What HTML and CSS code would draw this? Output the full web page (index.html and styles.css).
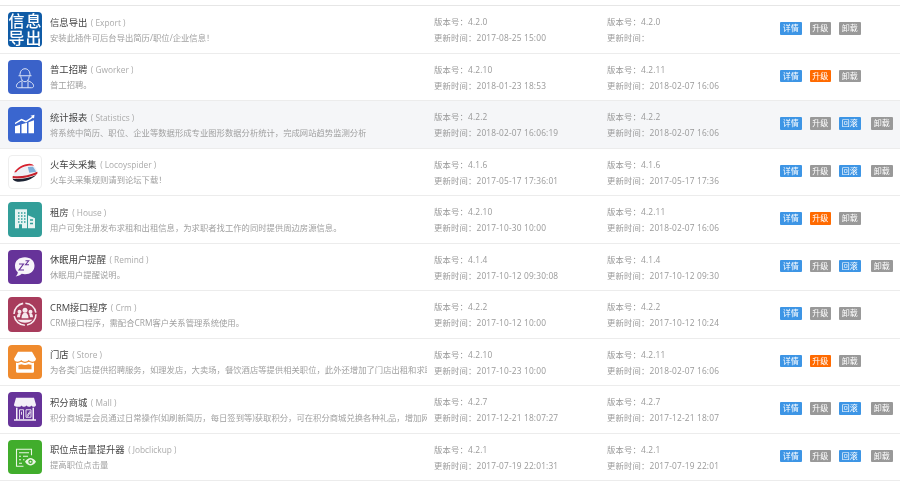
FILE: index.html
```html
<!DOCTYPE html>
<html lang="zh-CN">
<head>
<meta charset="utf-8">
<title>插件管理</title>
<link rel="stylesheet" href="styles.css">
</head>
<body>
<main class="list">

<section class="row">
  <div class="name">
    <div class="icon icon-export"><span>信</span><span>息</span><span>导</span><span>出</span></div>
    <div class="info"><p class="title">信息导出<span class="code">( Export )</span></p><p class="desc">安装此插件可后台导出简历/职位/企业信息！</p></div>
  </div>
  <div class="ver"><p>版本号：4.2.0</p><p>更新时间：2017-08-25 15:00</p></div>
  <div class="ver"><p>版本号：4.2.0</p><p>更新时间：</p></div>
  <div class="actions"><a class="btn blue">详情</a><a class="btn gray">升级</a><a class="btn gray">卸载</a></div>
</section>

<section class="row">
  <div class="name">
    <div class="icon icon-worker"><svg viewBox="0 0 34 34"><g fill="none" stroke="#dfe6f7" stroke-width="1"><path d="M10.500 15.500h13M12 15.500c-.3-4 1.700-7 5-7s5.300 3 5 7"/><path d="M12.800 16c.3 3.300 2 5.500 4.200 5.500s3.900-2.200 4.200-5.500"/><path d="M14 20.500c-2.500 1-5 2.300-5.500 4.500-.4 1.800.5 2.500 2 2.500h13c1.500 0 2.400-.7 2-2.500-.5-2.200-3-3.500-5.500-4.500"/><path d="M14 21v6.500M20 21v6.500"/></g></svg></div>
    <div class="info"><p class="title">普工招聘<span class="code">( Gworker )</span></p><p class="desc">普工招聘。</p></div>
  </div>
  <div class="ver"><p>版本号：4.2.10</p><p>更新时间：2018-01-23 18:53</p></div>
  <div class="ver"><p>版本号：4.2.11</p><p>更新时间：2018-02-07 16:06</p></div>
  <div class="actions"><a class="btn blue">详情</a><a class="btn orange">升级</a><a class="btn gray">卸载</a></div>
</section>

<section class="row hover">
  <div class="name">
    <div class="icon icon-stats"><svg viewBox="0 0 34 34"><g fill="#fff"><path d="M7 19l5-1.500V26H7zM13.500 17l5.500-1.500V26h-5.500zM20.500 15l5.500-2v13h-5.500z"/><path d="M7 15.500l6.500-4 4.500 2 6-4-1.500-1 4-1-.5 3.800-1-.8-7 4.800-4.500-2L7 17z"/></g></svg></div>
    <div class="info"><p class="title">统计报表<span class="code">( Statistics )</span></p><p class="desc">将系统中简历、职位、企业等数据形成专业图形数据分析统计，完成网站趋势监测分析</p></div>
  </div>
  <div class="ver"><p>版本号：4.2.2</p><p>更新时间：2018-02-07 16:06:19</p></div>
  <div class="ver"><p>版本号：4.2.2</p><p>更新时间：2018-02-07 16:06</p></div>
  <div class="actions"><a class="btn blue">详情</a><a class="btn gray">升级</a><a class="btn blue">回滚</a><a class="btn gray">卸载</a></div>
</section>

<section class="row">
  <div class="name">
    <div class="icon icon-train"><svg viewBox="0 0 34 34"><path d="M4 22c1-7 8-14 18-14 3 0 6 3 8 8 .5 1.500-.3 2.500-2 3-8 3-15 4-24 3z" fill="#eef0f6"/><path d="M5.500 17c3.500-5 9.500-9 16.500-9 1.700 0 3.300.8 4.500 2-7.500-1-15 2-19 7z" fill="#d8222f"/><path d="M4 21c8 1 17-.5 26-4.500.6 1.500.2 2.500-1.500 3.200-8 3-16 4.500-24.700 3.800z" fill="#c4202c"/><path d="M4 24c8 .8 17-.5 25-4-5 5-13 7.500-20 7-3 -.2-5-1.500-5-3z" fill="#1c2333"/><path d="M20 11.500l5.500-.3 3.500 5.300-7.500 1z" fill="#7fb0da"/></svg></div>
    <div class="info"><p class="title">火车头采集<span class="code">( Locoyspider )</span></p><p class="desc">火车头采集规则请到论坛下载！</p></div>
  </div>
  <div class="ver"><p>版本号：4.1.6</p><p>更新时间：2017-05-17 17:36:01</p></div>
  <div class="ver"><p>版本号：4.1.6</p><p>更新时间：2017-05-17 17:36</p></div>
  <div class="actions"><a class="btn blue">详情</a><a class="btn gray">升级</a><a class="btn blue">回滚</a><a class="btn gray">卸载</a></div>
</section>

<section class="row">
  <div class="name">
    <div class="icon icon-house"><svg viewBox="0 0 34 34"><path d="M7 7h12v19h-5v-4h-3v4H7zM20 13l7 3v10h-7z" fill="#e6f4f2"/><path d="M10 10h1.500v1.500H10zM13 10h1.500v1.500H13zM16 10h1.500v1.500H16zM10 13h1.500v1.500H10zM13 13h1.500v1.500H13zM16 13h1.500v1.500H16zM10 16h1.500v1.500H10zM13 16h1.500v1.500H13zM16 16h1.500v1.500H16zM10 19h1.500v1.500H10zM13 19h1.500v1.500H13zM16 19h1.500v1.500H16zM22 17h3v1.500h-3zM22 20.500h3V22h-3z" fill="#329e99"/></svg></div>
    <div class="info"><p class="title">租房<span class="code">( House )</span></p><p class="desc">用户可免注册发布求租和出租信息，为求职者找工作的同时提供周边房源信息。</p></div>
  </div>
  <div class="ver"><p>版本号：4.2.10</p><p>更新时间：2017-10-30 10:00</p></div>
  <div class="ver"><p>版本号：4.2.11</p><p>更新时间：2018-02-07 16:06</p></div>
  <div class="actions"><a class="btn blue">详情</a><a class="btn orange">升级</a><a class="btn gray">卸载</a></div>
</section>

<section class="row">
  <div class="name">
    <div class="icon icon-sleep"><svg viewBox="0 0 34 34"><path d="M17 7c5.500 0 9.500 3.500 9.500 8.500S22.500 24 17 24c-1.200 0-2.300-.1-3.300-.4-1.500 1.500-3.500 2.400-6 2.700 1.300-1.200 2-2.600 2.100-4.200C8 20.500 7 18.200 7 15.500 7 10.500 11 7 17 7z" fill="#f7f3fa"/><path d="M11 13.800h4.500L11 19.800h5M17.500 10.500h3.200l-3.200 4h3.500" fill="none" stroke="#663399" stroke-width="1.100"/></svg></div>
    <div class="info"><p class="title">休眠用户提醒<span class="code">( Remind )</span></p><p class="desc">休眠用户提醒说明。</p></div>
  </div>
  <div class="ver"><p>版本号：4.1.4</p><p>更新时间：2017-10-12 09:30:08</p></div>
  <div class="ver"><p>版本号：4.1.4</p><p>更新时间：2017-10-12 09:30</p></div>
  <div class="actions"><a class="btn blue">详情</a><a class="btn gray">升级</a><a class="btn blue">回滚</a><a class="btn gray">卸载</a></div>
</section>

<section class="row">
  <div class="name">
    <div class="icon icon-crm"><svg viewBox="0 0 34 34"><circle cx="17" cy="17" r="11" fill="none" stroke="#f6e9ee" stroke-width="1.600" stroke-dasharray="15 2.300"/><g fill="#f6e9ee"><circle cx="17" cy="13" r="2.500"/><circle cx="11.500" cy="14.500" r="2"/><circle cx="22.500" cy="14.500" r="2"/><path d="M13.500 21c0-3.500 1.500-5.500 3.500-5.500s3.500 2 3.500 5.500zM9 20c0-2.500 1-4 2.500-4 .6 0 1 .2 1.400.5-.6 1-.9 2.200-.9 3.500zM25 20c0-2.500-1-4-2.500-4-.6 0-1 .2-1.400.5.6 1 .9 2.200.9 3.500z"/><path d="M9.500 22.500h15c-1.500 2-4.500 3-7.500 3s-6-1-7.500-3z"/></g></svg></div>
    <div class="info"><p class="title">CRM接口程序<span class="code">( Crm )</span></p><p class="desc">CRM接口程序，需配合CRM客户关系管理系统使用。</p></div>
  </div>
  <div class="ver"><p>版本号：4.2.2</p><p>更新时间：2017-10-12 10:00</p></div>
  <div class="ver"><p>版本号：4.2.2</p><p>更新时间：2017-10-12 10:24</p></div>
  <div class="actions"><a class="btn blue">详情</a><a class="btn gray">升级</a><a class="btn gray">卸载</a></div>
</section>

<section class="row">
  <div class="name">
    <div class="icon icon-store"><svg viewBox="0 0 34 34"><path d="M10 6.500h14l4 7c0 2-1.600 3-3.700 3-1.400 0-2.500-.6-3.600-1.700-1 1.100-2.200 1.700-3.700 1.700s-2.700-.6-3.700-1.700C12.200 15.900 11.100 16.500 9.700 16.500 7.600 16.500 6 15.500 6 13.500z" fill="#fff"/><path d="M8 17.500c2 .4 3.500 0 5-1 2.500 1.500 5.500 1.500 8 0 1.500 1 3 1.400 5 1V26a1.500 1.500 0 0 1-1.500 1.500h-15A1.500 1.500 0 0 1 8 26zM10.500 19.500c1.500.2 2.500-.2 3-.5 2 1 5 1 7 0 .5.3 1.500.7 3 .5V24h-13z" fill="#fff" fill-rule="evenodd"/></svg></div>
    <div class="info"><p class="title">门店<span class="code">( Store )</span></p><p class="desc">为各类门店提供招聘服务，如理发店，大卖场，餐饮酒店等提供相关职位，此外还增加了门店出租和求职信息</p></div>
  </div>
  <div class="ver"><p>版本号：4.2.10</p><p>更新时间：2017-10-23 10:00</p></div>
  <div class="ver"><p>版本号：4.2.11</p><p>更新时间：2018-02-07 16:06</p></div>
  <div class="actions"><a class="btn blue">详情</a><a class="btn orange">升级</a><a class="btn gray">卸载</a></div>
</section>

<section class="row">
  <div class="name">
    <div class="icon icon-mall"><svg viewBox="0 0 34 34"><path d="M8 5.500h18l2 7c0 1.500-1.200 2-2.300 2-1 0-1.800-.4-2.200-1.200-.5.800-1.500 1.200-2.500 1.200s-1.900-.4-2.500-1.200c-.6.800-1.500 1.200-2.500 1.200s-2-.4-2.500-1.200c-.4.800-1.200 1.200-2.200 1.200C7.200 14.500 6 14 6 12.500z" fill="#f4eff8"/><path d="M8 15.500h1.500V27h15V15.500H26V27h2v1.500H6V27h2z" fill="#f4eff8"/><path d="M11.500 27V17.500h4V27M13.500 19.500v3M18 17.500h5V25h-5zM19 23.500l3-4.500M19.500 24.500l3-4.500" fill="none" stroke="#f4eff8" stroke-width=".9"/></svg></div>
    <div class="info"><p class="title">积分商城<span class="code">( Mall )</span></p><p class="desc">积分商城是会员通过日常操作(如刷新简历，每日签到等)获取积分，可在积分商城兑换各种礼品，增加网站用户黏性</p></div>
  </div>
  <div class="ver"><p>版本号：4.2.7</p><p>更新时间：2017-12-21 18:07:27</p></div>
  <div class="ver"><p>版本号：4.2.7</p><p>更新时间：2017-12-21 18:07</p></div>
  <div class="actions"><a class="btn blue">详情</a><a class="btn gray">升级</a><a class="btn blue">回滚</a><a class="btn gray">卸载</a></div>
</section>

<section class="row">
  <div class="name">
    <div class="icon icon-click"><svg viewBox="0 0 34 34"><path d="M23.500 15V9h-15v17h7" fill="none" stroke="#eaf6e4" stroke-width="1.100"/><path d="M11 12.500h10M11 16h2M15 16h5M11 19.500h2M15 19.500h1.500M11 23h3" stroke="#eaf6e4" stroke-width="1"/><path d="M17 21.500c1.700-2.500 3.700-3.700 5.500-3.700s3.800 1.200 5.500 3.700c-1.700 2.500-3.700 3.700-5.500 3.700s-3.800-1.200-5.500-3.700z" fill="#eaf6e4"/><circle cx="22.500" cy="21.500" r="2.200" fill="#41ad2c"/><circle cx="22.500" cy="21.500" r="1" fill="#eaf6e4"/></svg></div>
    <div class="info"><p class="title">职位点击量提升器<span class="code">( Jobclickup )</span></p><p class="desc">提高职位点击量</p></div>
  </div>
  <div class="ver"><p>版本号：4.2.1</p><p>更新时间：2017-07-19 22:01:31</p></div>
  <div class="ver"><p>版本号：4.2.1</p><p>更新时间：2017-07-19 22:01</p></div>
  <div class="actions"><a class="btn blue">详情</a><a class="btn gray">升级</a><a class="btn blue">回滚</a><a class="btn gray">卸载</a></div>
</section>

<section class="row">
  <div class="name"><div class="icon icon-next"></div></div>
</section>

</main>
</body>
</html>
```

FILE: styles.css
```css
html, body {
  margin: 0;
  height: 100%;
  overflow: hidden;
  background: #fff;
}

p { margin: 0; }

.list {
  margin-top: 5px;
  border-top: 1px solid #e6e6e6;
  font-family: "Open Sans", "Noto Sans CJK SC", sans-serif;
  font-size: 8.33px;
  line-height: 15.8px;
  color: #999;
  filter: blur(0.4px);
}

.row {
  display: grid;
  grid-template-columns: 427px 173px 173px 1fr;
  height: 47.5px;
  box-sizing: border-box;
  border-bottom: 1px solid #ececec;
  align-items: center;
}

.row.hover { background: #f5f6f8; }

.name {
  display: flex;
  align-items: center;
  gap: 8px;
  padding-left: 8px;
  min-width: 0;
  overflow: hidden;
}

.info {
  min-width: 0;
  overflow: hidden;
  padding-top: 2px;
}

.title {
  font-size: 9.33px;
  line-height: 15px;
  color: #444;
  white-space: nowrap;
}

.code {
  margin-left: 3.5px;
  color: #aaa;
  font-size: 8.33px;
}

.desc { white-space: nowrap; color: #a0a0a0; }

.ver {
  padding-left: 7px;
  padding-top: 2px;
  white-space: nowrap;
  color: #999;
  letter-spacing: 0.17px;
}

.actions {
  display: flex;
  padding-left: 7px;
  padding-bottom: 2px;
  gap: 8px;
}

.btn {
  width: 21.5px;
  height: 12.5px;
  border-radius: 1px;
  font-size: 8px;
  line-height: 12.5px;
  text-align: center;
  color: #fff;
}

.btn:nth-child(4) { margin-left: 2.5px; }

.blue { background: #3d95e5; }
.gray { background: #999; }
.orange { background: #ff6a00; }

.icon {
  flex: none;
  width: 34px;
  height: 34.5px;
  border-radius: 4px;
  overflow: hidden;
}

.icon svg { display: block; width: 100%; height: 100%; }

.icon-export {
  display: grid;
  grid-template-columns: 1fr 1fr;
  grid-template-rows: 1fr 1fr;
  overflow: visible;
  background: #0f5ba6;
  color: #fff;
  font-family: "Noto Sans CJK SC", sans-serif;
  font-size: 16px;
  line-height: 17px;
  font-weight: 500;
  text-align: center;
}

.icon-worker { background: #3a62c9; }
.icon-stats { background: #3a66cf; }
.icon-train { background: #fff; border: 1px solid #eee; box-sizing: border-box; }
.icon-house { background: #329e99; }
.icon-sleep { background: #663399; }
.icon-crm { background: #a83c5c; }
.icon-store { background: #ef8a2d; }
.icon-mall { background: #663399; }
.icon-click { background: #41ad2c; }
.icon-next { background: #7468c0; }
```
